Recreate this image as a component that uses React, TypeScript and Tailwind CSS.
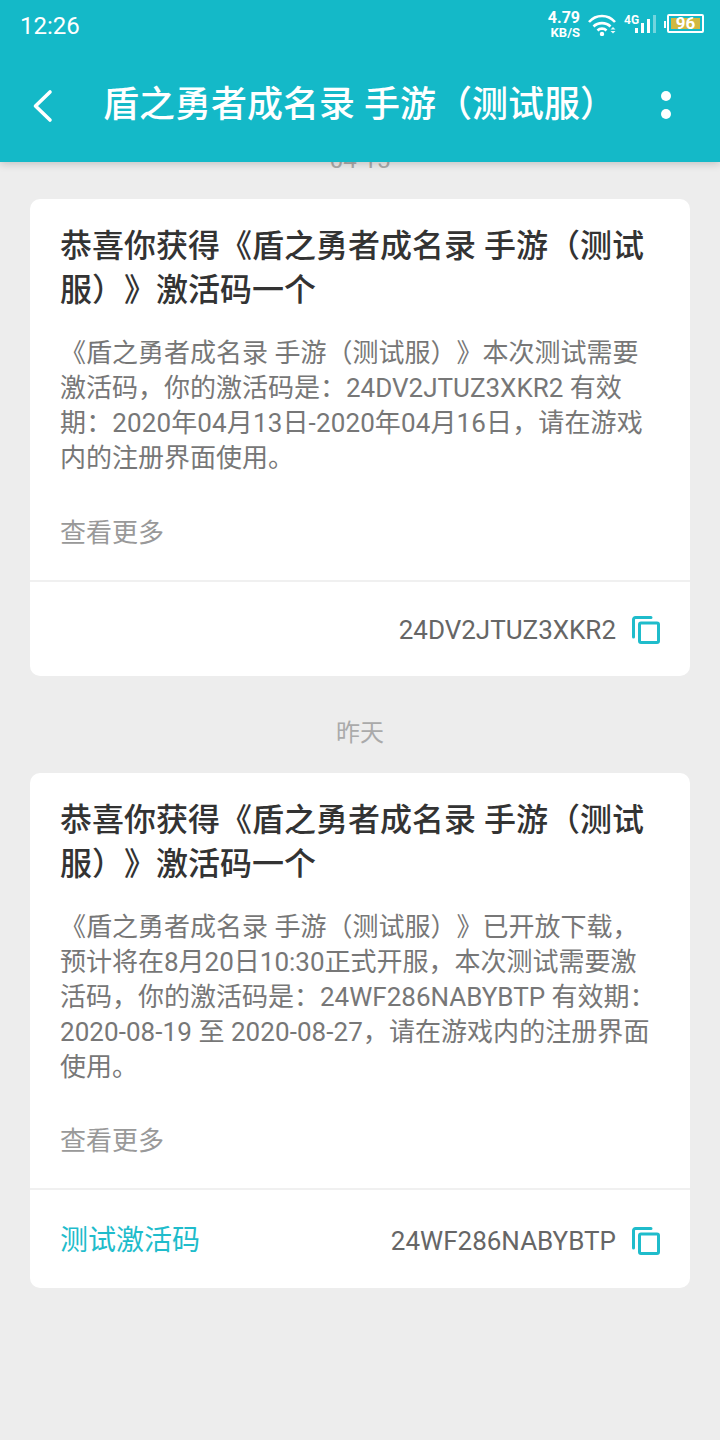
import type { ReactNode } from "react";

const FONT = "font-['Roboto','Noto_Sans_CJK_SC',sans-serif] [text-spacing-trim:space-all]";

const CopyIcon = () => (
  <svg width="28" height="28" viewBox="0 0 28 28" fill="none" stroke="#1fbccb" strokeWidth="3" className="ml-[16px] -mt-[1px] shrink-0">
    <path d="M1.500 21V3.500a2 2 0 0 1 2-2H19" strokeLinecap="round" />
    <rect x="7.500" y="7" width="19" height="19.500" rx="1.500" />
  </svg>
);

const StatusBar = () => (
  <div className="flex h-[52px] items-center justify-between pl-[20px] pr-[16px] text-white">
    <span className="text-[24px] leading-none">12:26</span>
    <div className="flex items-center">
      <div className="flex flex-col items-end font-bold mr-[8px] -mt-[3px]">
        <span className="text-[16px] leading-[16px]">4.79</span>
        <span className="text-[13px] leading-[13px]">KB/S</span>
      </div>
      <svg width="28" height="24" viewBox="0 0 28 24" fill="none" stroke="#fff" strokeWidth="2.600" className="mr-[8px] -mt-[4px]">
        <path d="M1 10C8 2 20 2 27 10" />
        <path d="M5.500 14.500C10 10 18 10 22.500 14.500" />
        <path d="M9.500 18.500C12 16 16 16 18.500 18.500" />
        <circle cx="14" cy="22" r="2.200" fill="#fff" stroke="none" />
        <path d="M22.500 17.500l2.500-2.500 2.500 2.500zM22.500 19l2.500 2.500 2.500-2.500z" fill="#e6f8fa" stroke="none" />
      </svg>
      <div className="relative w-[32px] h-[24px] mr-[8px] -mt-[2px]">
        <span className="absolute left-0 top-[1px] text-[12px] leading-[12px] font-bold">4G</span>
        <div className="absolute left-[11px] bottom-[4px] flex items-end gap-[3px]">
          <div className="w-[3px] h-[5px] bg-white" />
          <div className="w-[3px] h-[10px] bg-white" />
          <div className="w-[3px] h-[14px] bg-white" />
          <div className="w-[3px] h-[18px] bg-white/40" />
        </div>
      </div>
      <div className="w-[2px] h-[7px] bg-white mr-[1px] -mt-[3px]" />
      <div className="w-[37px] h-[19px] border-2 border-white rounded-[2px] p-[2px] flex -mt-[5px]">
        <div className="w-[29px] bg-[#d1b840] flex items-center justify-center text-[17px] font-bold leading-none">96</div>
      </div>
    </div>
  </div>
);

const Header = () => (
  <div className="relative z-10 h-[162px] bg-[#14b9c8] shadow-[0_2px_8px_rgba(0,0,0,0.18)] shrink-0">
    <StatusBar />
    <div className="flex items-center h-[110px] pb-[4px]">
      <svg width="24" height="36" viewBox="0 0 24 36" fill="none" stroke="#fff" strokeWidth="3.600" strokeLinecap="round" strokeLinejoin="round" className="ml-[31px]">
        <path d="M19 5L4.500 19 19 33" />
      </svg>
      <h1 className="ml-[48px] text-[36px] leading-none font-medium text-white whitespace-nowrap">盾之勇者成名录 手游（测试服）</h1>
      <div className="ml-auto mr-[49px] flex flex-col gap-[8px]">
        <div className="w-[10px] h-[10px] rounded-full bg-white" />
        <div className="w-[10px] h-[10px] rounded-full bg-white" />
      </div>
    </div>
  </div>
);

type CardProps = { body: ReactNode[]; code: string; tag?: string; moreGap: string; footer: string };

const Card = ({ body, code, tag, moreGap, footer }: CardProps) => (
  <div className="mx-[30px] bg-white rounded-[10px]">
    <div className="px-[30px] pt-[25px]">
      <h2 className="text-[32px] leading-[44px] font-medium text-[#333] whitespace-nowrap">
        恭喜你获得《盾之勇者成名录 手游（测试
        <br />
        服）》激活码一个
      </h2>
      <div className="mt-[24px] text-[26px] leading-[35px] text-[#777] whitespace-nowrap">
        {body.map((line, i) => (
          <div key={i}>{line}</div>
        ))}
      </div>
      <div className={`${moreGap} text-[26px] leading-[35px] text-[#999]`}>查看更多</div>
    </div>
    <div className="mt-[29px] h-[2px] bg-[#f0f0f0]" />
    <div className={`flex items-center ${footer} pl-[30px] pr-[30px]`}>
      {tag && <span className="text-[28px] text-[#1fbccb]">{tag}</span>}
      <span className="ml-auto text-[26px] text-[#666]">{code}</span>
      <CopyIcon />
    </div>
  </div>
);

export default function App() {
  return (
    <div className={`${FONT} w-[720px] h-[1440px] bg-[#ededed] flex flex-col overflow-hidden`}>
      <Header />
      <div className="-mt-[42px]">
        <div className="h-[79px] flex items-center justify-center text-[24px] text-[#aaa]">04-15</div>
        <Card
          moreGap="mt-[40px]"
          footer="h-[94px] pt-[2px]"
          code="24DV2JTUZ3XKR2"
          body={[
            "《盾之勇者成名录 手游（测试服）》本次测试需要",
            "激活码，你的激活码是：24DV2JTUZ3XKR2 有效",
            <span className="tracking-[0.13px]">期：2020年04月13日-2020年04月16日，请在游戏</span>,
            "内的注册界面使用。",
          ]}
        />
        <div className="h-[97px] pt-[16px] flex items-center justify-center text-[24px] text-[#aaa]">昨天</div>
        <Card
          moreGap="mt-[39px]"
          footer="h-[98px] pt-[4px]"
          code="24WF286NABYBTP"
          tag="测试激活码"
          body={[
            "《盾之勇者成名录 手游（测试服）》已开放下载，",
            "预计将在8月20日10:30正式开服，本次测试需要激",
            "活码，你的激活码是：24WF286NABYBTP 有效期：",
            <span className="tracking-[0.06px]">2020-08-19 至 2020-08-27，请在游戏内的注册界面</span>,
            "使用。",
          ]}
        />
      </div>
    </div>
  );
}
